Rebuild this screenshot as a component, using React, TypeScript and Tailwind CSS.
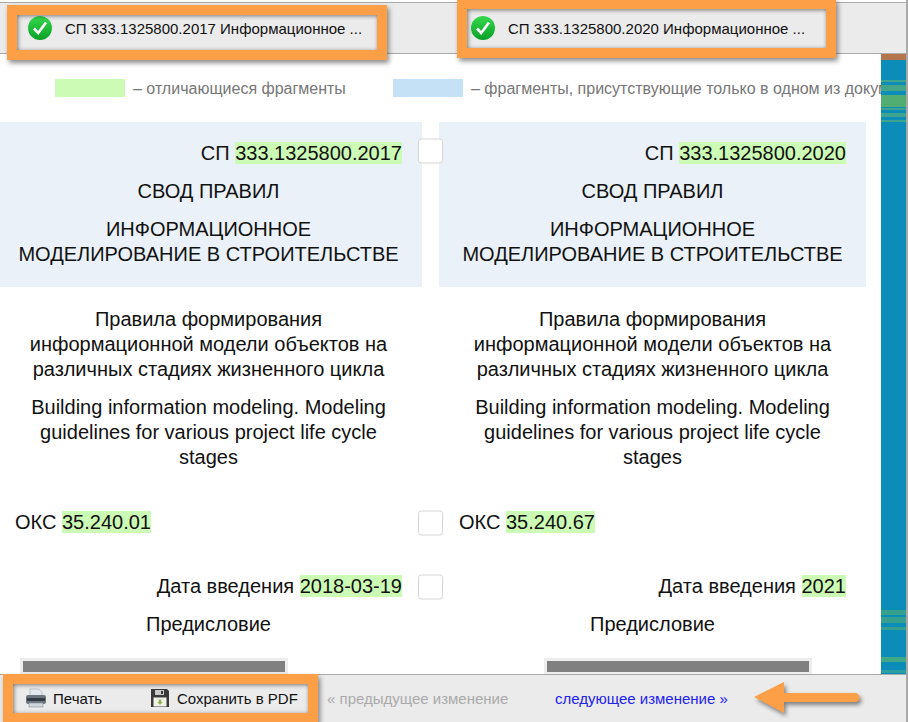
const FONT = "font-['Liberation_Sans',Arial,sans-serif]";

function CheckIcon() {
  return (
    <svg width="26" height="26" viewBox="0 0 26 26" className="shrink-0">
      <defs>
        <linearGradient id="checkGrad" x1="0" y1="0" x2="0" y2="1">
          <stop offset="0" stopColor="#35d94a" />
          <stop offset="1" stopColor="#0b9f2a" />
        </linearGradient>
      </defs>
      <circle cx="13" cy="13" r="12" fill="url(#checkGrad)" />
      <path d="M7 13.5l4.2 4.5L19 7.5" fill="none" stroke="#fff" strokeWidth="2.6" />
    </svg>
  );
}

function PrinterIcon() {
  return (
    <svg width="22" height="20" viewBox="0 0 22 20" className="shrink-0">
      <path d="M5 1h9l3 3v5H5z" fill="#e4e8ec" stroke="#b4bcc4" strokeWidth="0.8" />
      <rect x="1" y="7" width="20" height="9" rx="2" fill="#6d7680" />
      <rect x="2" y="10" width="18" height="3" fill="#333a42" />
      <path d="M4 15h14v4H4z" fill="#cfd6dc" stroke="#8a949c" strokeWidth="0.6" />
    </svg>
  );
}

function FloppyIcon() {
  return (
    <svg width="18" height="18" viewBox="0 0 18 18" className="shrink-0">
      <path d="M0 0h16l2 2v16H0z" fill="#3a3a3a" />
      <rect x="4" y="1" width="9" height="5" fill="#c9c9c9" />
      <rect x="10" y="2" width="2" height="3" fill="#3a3a3a" />
      <rect x="2.5" y="8.5" width="13" height="9" fill="#f2f2ea" />
      <path d="M7.8 10.5h2.4v2.5h1.6L9 16l-2.8-3h1.6z" fill="#8fb04a" />
    </svg>
  );
}

function Hl({ children }: { children: React.ReactNode }) {
  return <span className="bg-[#ccfbb5]">{children}</span>;
}

function Box() {
  return (
    <div className="absolute left-[-4px] top-1/2 h-[25px] w-[25px] -translate-y-1/2 rounded-[3px] border border-[#d6d6d6] bg-white" />
  );
}

// one row of the comparison: left text, gutter, right text
function Row({
  left,
  right,
  align = "text-center",
  tinted = false,
  box = false,
  className = "",
}: {
  left: React.ReactNode;
  right: React.ReactNode;
  align?: string;
  tinted?: boolean;
  box?: boolean;
  className?: string;
}) {
  const bg = tinted ? "bg-[#eaf1f8]" : "";
  return (
    <div className={`grid grid-cols-[422px_17px_427px] ${className}`}>
      <div className={`pl-[15px] pr-[20px] ${align} ${bg}`}>{left}</div>
      <div className="relative">{box && <Box />}</div>
      <div className={`px-[20px] ${align} ${bg}`}>{right}</div>
    </div>
  );
}

const STRIPES = [
  { h: 20, c: "bg-[#0b8cb9]" },
  { h: 2, c: "bg-[#3fa38d]" },
  { h: 3, c: "bg-[#0b8cb9]" },
  { h: 6, c: "bg-[#43a586]" },
  { h: 4, c: "bg-[#0b8cb9]" },
  { h: 12, c: "bg-[#52ad73]" },
  { h: 1, c: "bg-[#0b8cb9]" },
  { h: 2, c: "bg-[#3fa38d]" },
  { h: 3, c: "bg-[#0b8cb9]" },
  { h: 4, c: "bg-[#3fa38d]" },
  { h: 3, c: "bg-[#0b8cb9]" },
  { h: 2, c: "bg-[#3fa38d]" },
  { h: 488, c: "bg-[#0b8cb9]" },
  { h: 5, c: "bg-[#35a08b]" },
  { h: 2, c: "bg-[#0b8cb9]" },
  { h: 6, c: "bg-[#35a08b]" },
  { h: 4, c: "bg-[#0b8cb9]" },
  { h: 3, c: "bg-[#35a08b]" },
  { h: 27, c: "bg-[#0b8cb9]" },
  { h: 5, c: "bg-[#3fa885]" },
  { h: 8, c: "bg-[#0b8cb9]" },
  { h: 3, c: "bg-[#2b9ea0]" },
  { h: 1, c: "bg-[#0b8cb9]" },
];

function Annotation({ className }: { className: string }) {
  return (
    <div
      className={`pointer-events-none absolute border-[10px] border-[#fd9f47] shadow-[2px_3px_5px_rgba(0,0,0,0.45),inset_1px_1px_4px_rgba(0,0,0,0.5)] ${className}`}
    />
  );
}

export default function App() {
  return (
    <div className={`relative flex h-[722px] w-[908px] flex-col overflow-hidden bg-white text-[20px] leading-[25px] text-[#111] ${FONT}`}>
      <header className="mt-[2px] flex h-[52px] shrink-0 items-center border-y border-[#ababab] bg-[#ebebeb] text-[15px] text-[#111]">
        <div className="flex w-[443px] items-center gap-[12px] pl-[27px]">
          <CheckIcon />
          <span>СП 333.1325800.2017 Информационное ...</span>
        </div>
        <div className="flex items-center gap-[12px] pl-[27px]">
          <CheckIcon />
          <span>СП 333.1325800.2020 Информационное ...</span>
        </div>
      </header>

      <div className="flex min-h-0 flex-1 pr-[2px]">
        <main className="min-w-0 flex-1 overflow-hidden">
          <div className="flex h-[68px] items-center whitespace-nowrap text-[16px] text-[#777]">
            <span className="ml-[55px] h-[18px] w-[70px] shrink-0 bg-[#ccfbb5]" />
            <span className="ml-[8px] w-[260px] shrink-0">– отличающиеся фрагменты</span>
            <span className="h-[18px] w-[70px] shrink-0 bg-[#c5e1f5]" />
            <span className="ml-[8px]">– фрагменты, присутствующие только в одном из документов</span>
          </div>

          <Row
            tinted
            box
            align="text-right"
            className="pb-0"
            left={<div className="pt-[19px] pb-[13px]">СП <Hl>333.1325800.2017</Hl></div>}
            right={<div className="pt-[19px] pb-[13px]">СП <Hl>333.1325800.2020</Hl></div>}
          />
          <Row
            tinted
            left={<div className="pb-[13px]">СВОД ПРАВИЛ</div>}
            right={<div className="pb-[13px]">СВОД ПРАВИЛ</div>}
          />
          <Row
            tinted
            left={<div className="pb-[20px]">ИНФОРМАЦИОННОЕ<br />МОДЕЛИРОВАНИЕ В СТРОИТЕЛЬСТВЕ</div>}
            right={<div className="pb-[20px]">ИНФОРМАЦИОННОЕ<br />МОДЕЛИРОВАНИЕ В СТРОИТЕЛЬСТВЕ</div>}
          />
          <Row
            className="mt-[20px]"
            left={<>Правила формирования<br />информационной модели объектов на<br />различных стадиях жизненного цикла</>}
            right={<>Правила формирования<br />информационной модели объектов на<br />различных стадиях жизненного цикла</>}
          />
          <Row
            className="mt-[13px]"
            left={<>Building information modeling. Modeling<br />guidelines for various project life cycle<br />stages</>}
            right={<>Building information modeling. Modeling<br />guidelines for various project life cycle<br />stages</>}
          />
          <Row
            box
            align="text-left"
            className="mt-[40px]"
            left={<>ОКС <Hl>35.240.01</Hl></>}
            right={<>ОКС <Hl>35.240.67</Hl></>}
          />
          <Row
            box
            align="text-right"
            className="mt-[39px]"
            left={<>Дата введения <Hl>2018-03-19</Hl></>}
            right={<>Дата введения <Hl>2021</Hl></>}
          />
          <Row className="mt-[13px]" left="Предисловие" right="Предисловие" />
          <div className="mt-[21px] grid grid-cols-[268px_256px_268px] pl-[20px]">
            <div className="h-[16px] bg-[#ededed] p-[3px]">
              <div className="h-[11px] bg-[#808080]" />
            </div>
            <div />
            <div className="h-[18px] bg-[#ededed] p-[3px]">
              <div className="h-[11px] bg-[#808080]" />
            </div>
          </div>
        </main>

        <aside className="flex w-[25px] shrink-0 flex-col">
          <div className="h-[6px] bg-[#b5764d]" />
          {STRIPES.map((s, i) => (
            <div key={i} className={s.c} style={{ height: s.h }} />
          ))}
        </aside>
      </div>

      <footer className="flex h-[48px] shrink-0 items-center border-t border-[#ababab] bg-[#ebebeb] pb-[1px] text-[15px]">
        <div className="ml-[25px] flex w-[126px] items-center gap-[6px]">
          <PrinterIcon />
          <span>Печать</span>
        </div>
        <div className="flex w-[176px] items-center gap-[8px]">
          <FloppyIcon />
          <span>Сохранить в PDF</span>
        </div>
        <span className="w-[228px] text-[#aaa]">« предыдущее изменение</span>
        <span className="text-[#2222ee]">следующее изменение »</span>
      </footer>

      <div className="absolute right-0 top-0 h-full w-[2px] bg-[#a9a9a9]" />

      <Annotation className="left-[7px] top-[5px] h-[55px] w-[380px]" />
      <Annotation className="left-[457px] top-[-1px] h-[59px] w-[379px]" />
      <Annotation className="left-[3px] top-[674px] h-[49px] w-[315px]" />

      <svg width="110" height="36" viewBox="0 0 110 36" className="absolute left-[752px] top-[679px] drop-shadow-[2px_3px_2px_rgba(0,0,0,0.45)]">
        <path d="M2 18L32 3v11h71a4 4 0 010 9H32v11z" fill="#fd9f47" />
      </svg>
    </div>
  );
}
